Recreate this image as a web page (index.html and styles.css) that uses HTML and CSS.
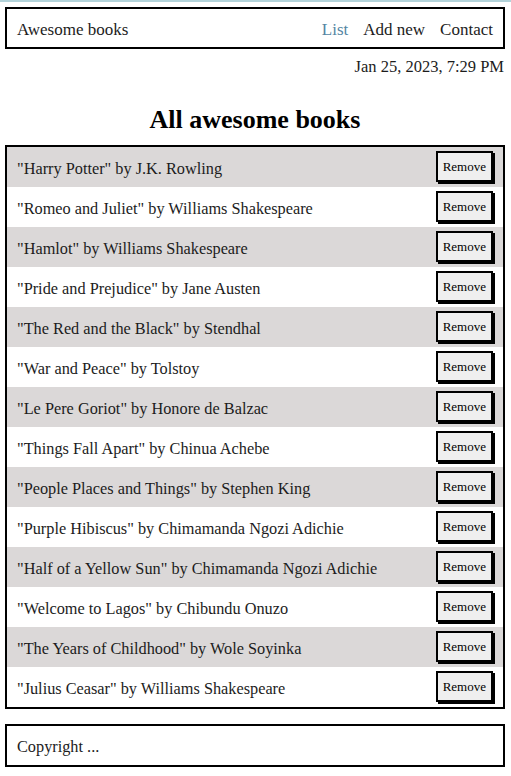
FILE: index.html
```html
<!DOCTYPE html>
<html lang="en">
<head>
<meta charset="utf-8">
<title>Awesome books</title>
<link rel="stylesheet" href="styles.css">
</head>
<body>
<div class="page">
  <header class="topbar">
    <span class="brand">Awesome books</span>
    <nav class="nav">
      <a class="nav-link active" href="#">List</a>
      <a class="nav-link" href="#">Add new</a>
      <a class="nav-link" href="#">Contact</a>
    </nav>
  </header>
  <div class="date">Jan 25, 2023, 7:29 PM</div>
  <h1 class="title">All awesome books</h1>
  <ul class="books">
    <li class="book"><span class="book-text">"Harry Potter" by J.K. Rowling</span><button class="remove">Remove</button></li>
    <li class="book"><span class="book-text">"Romeo and Juliet" by Williams Shakespeare</span><button class="remove">Remove</button></li>
    <li class="book"><span class="book-text">"Hamlot" by Williams Shakespeare</span><button class="remove">Remove</button></li>
    <li class="book"><span class="book-text">"Pride and Prejudice" by Jane Austen</span><button class="remove">Remove</button></li>
    <li class="book"><span class="book-text">"The Red and the Black" by Stendhal</span><button class="remove">Remove</button></li>
    <li class="book"><span class="book-text">"War and Peace" by Tolstoy</span><button class="remove">Remove</button></li>
    <li class="book"><span class="book-text">"Le Pere Goriot" by Honore de Balzac</span><button class="remove">Remove</button></li>
    <li class="book"><span class="book-text">"Things Fall Apart" by Chinua Achebe</span><button class="remove">Remove</button></li>
    <li class="book"><span class="book-text">"People Places and Things" by Stephen King</span><button class="remove">Remove</button></li>
    <li class="book"><span class="book-text">"Purple Hibiscus" by Chimamanda Ngozi Adichie</span><button class="remove">Remove</button></li>
    <li class="book"><span class="book-text">"Half of a Yellow Sun" by Chimamanda Ngozi Adichie</span><button class="remove">Remove</button></li>
    <li class="book"><span class="book-text">"Welcome to Lagos" by Chibundu Onuzo</span><button class="remove">Remove</button></li>
    <li class="book"><span class="book-text">"The Years of Childhood" by Wole Soyinka</span><button class="remove">Remove</button></li>
    <li class="book"><span class="book-text">"Julius Ceasar" by Williams Shakespeare</span><button class="remove">Remove</button></li>
  </ul>
  <footer class="footer"><span class="footer-text">Copyright ...</span></footer>
</div>
</body>
</html>
```

FILE: styles.css
```css
html, body {
  margin: 0;
  padding: 0;
  background: #fff;
}

body {
  border-top: 2px solid #b3d3da;
  font-family: "Liberation Serif", "Times New Roman", serif;
  font-size: 17px;
  color: #1c1c1c;
}

.page {
  width: 500px;
  margin-left: 5px;
}

.topbar {
  box-sizing: border-box;
  margin-top: 5px;
  height: 42px;
  border: 2px solid #000;
  display: flex;
  align-items: center;
  justify-content: space-between;
  padding: 3px 10px 0;
}

.nav {
  display: flex;
  gap: 15px;
}

.nav-link {
  color: #1c1c1c;
  text-decoration: none;
}

.nav-link.active {
  color: #5485a3;
}

.date {
  margin-top: 9px;
  line-height: 18px;
  text-align: right;
  padding-right: 1px;
  font-size: 16.5px;
}

.title {
  margin: 29px 0 10px;
  line-height: 30px;
  font-size: 26px;
  font-weight: bold;
  text-align: center;
  color: #000;
}

.books {
  list-style: none;
  margin: 0;
  padding: 0;
  border: 2px solid #000;
}

.book {
  height: 40px;
  display: flex;
  align-items: center;
  justify-content: space-between;
  padding: 0 10px;
}

.book-text {
  font-size: 16.3px;
  padding-top: 3px;
}

.book:nth-child(odd) {
  background: #dbd8d8;
}

.remove {
  font-family: "Liberation Serif", "Times New Roman", serif;
  font-size: 13px;
  color: #000;
  background: #efefef;
  border: 2px solid #000;
  box-shadow: 2px 2px 0 #000;
  padding: 6px 5px;
  line-height: 15px;
  margin-top: -1px;
}

.footer {
  box-sizing: border-box;
  margin-top: 15px;
  height: 43px;
  border: 2px solid #000;
  display: flex;
  align-items: center;
  padding: 2px 10px 0;
}

.footer-text {
  font-size: 16.3px;
}
```
